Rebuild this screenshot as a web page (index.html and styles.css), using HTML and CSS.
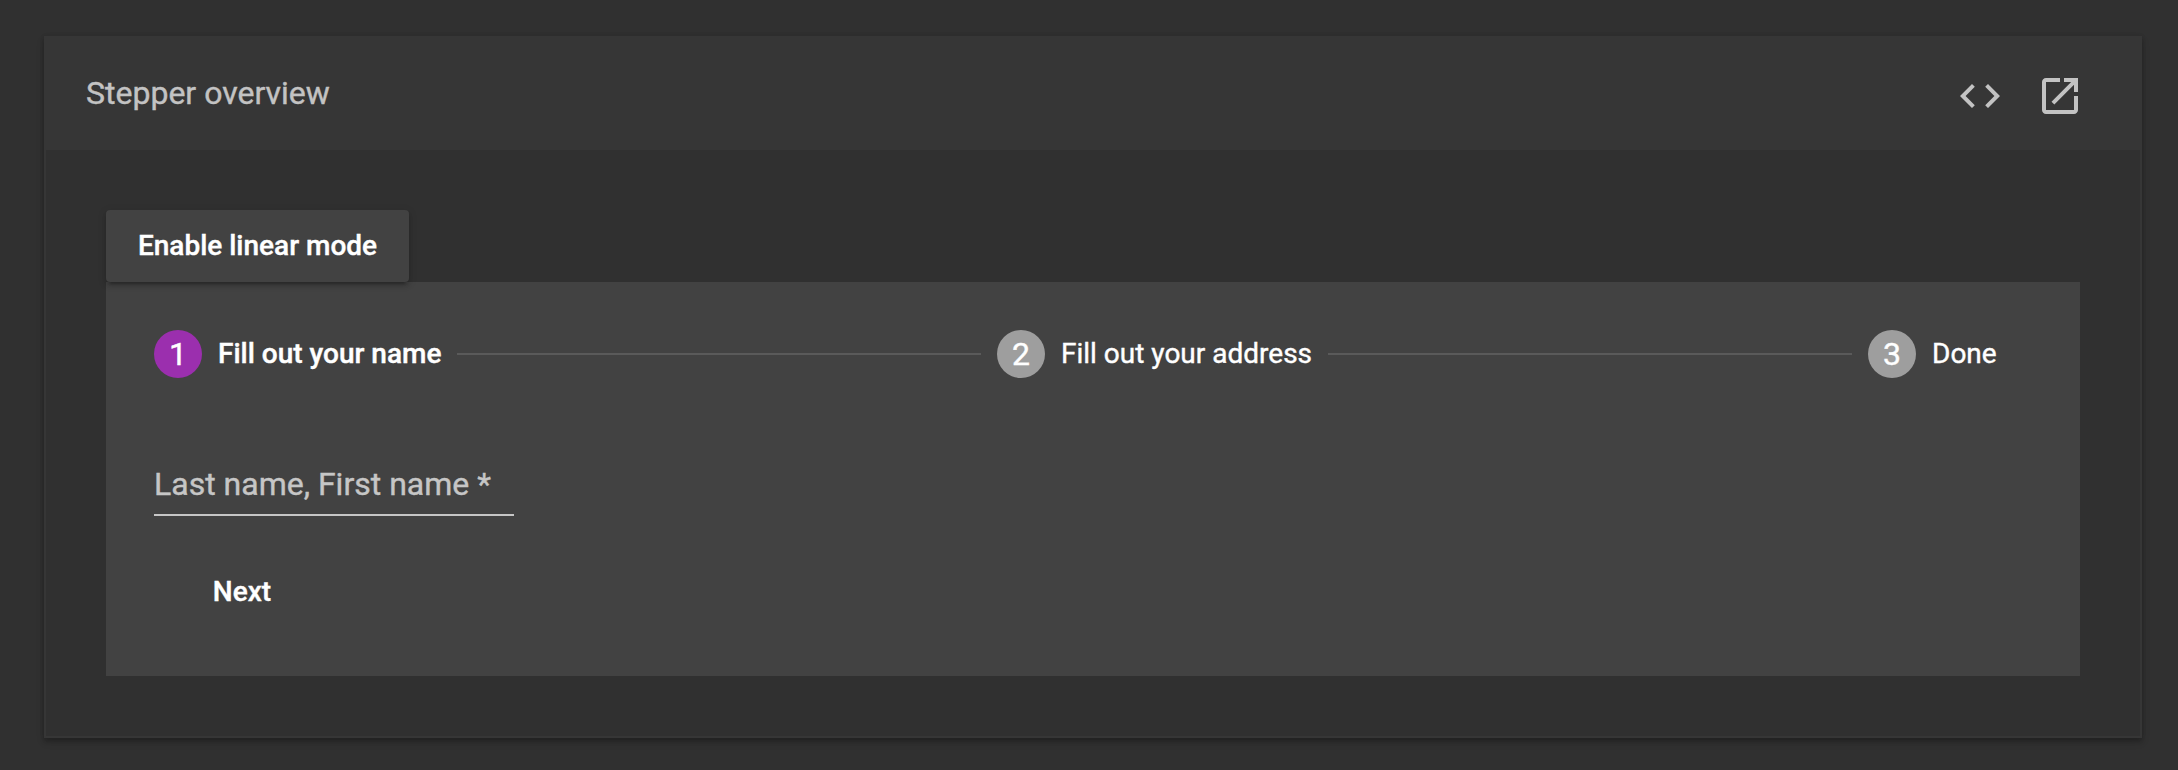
FILE: index.html
```html
<!DOCTYPE html>
<html lang="en">
<head>
<meta charset="utf-8">
<title>Stepper overview</title>
<link rel="stylesheet" href="styles.css">
</head>
<body>
<main class="card">
  <header class="card-header">
    <h1 class="title">Stepper overview</h1>
    <div class="actions">
      <svg class="icon" viewBox="0 0 24 24"><path d="M9.4 16.6L4.8 12l4.6-4.6L8 6l-6 6 6 6 1.4-1.4zm5.2 0l4.6-4.6-4.6-4.6L16 6l6 6-6 6-1.4-1.4z"/></svg>
      <svg class="icon" viewBox="0 0 24 24"><path d="M19 19H5V5h7V3H5c-1.11 0-2 .9-2 2v14c0 1.1.89 2 2 2h14c1.1 0 2-.9 2-2v-7h-2v7zM14 3v2h3.59l-9.83 9.83 1.41 1.41L19 6.41V10h2V3h-7z"/></svg>
    </div>
  </header>
  <section class="card-body">
    <button class="mode-button">Enable linear mode</button>
    <div class="stepper">
      <div class="steps">
        <div class="step active"><span class="badge">1</span><span class="label label-name">Fill out your name</span></div>
        <div class="line"></div>
        <div class="step"><span class="badge">2</span><span class="label label-address">Fill out your address</span></div>
        <div class="line"></div>
        <div class="step"><span class="badge">3</span><span class="label label-done">Done</span></div>
      </div>
      <form class="form">
        <div class="field"><span class="field-label">Last name, First name *</span></div>
        <button type="button" class="next">Next</button>
      </form>
    </div>
  </section>
</main>
</body>
</html>
```
FILE: styles.css
```css
* { box-sizing: border-box; }
body {
  margin: 0;
  padding: 36px 36px 32px 44px;
  height: 770px;
  overflow: hidden;
  background: #303030;
  color: #fff;
  font-family: Roboto, sans-serif;
  -webkit-text-stroke: 0.4px currentColor;
}
.card {
  width: 2098px;
  height: 702px;
  border: 2px solid #363636;
  box-shadow: 0 4px 4px rgba(0, 0, 0, .14), 0 0 4px rgba(0, 0, 0, .1), 0 4px 8px rgba(0, 0, 0, .12);
}
.card-header {
  display: flex;
  align-items: center;
  justify-content: space-between;
  height: 112px;
  padding: 0 56px 0 40px;
  background: #363636;
}
.title {
  margin: 0;
  padding-bottom: 2px;
  font-size: 32px;
  font-weight: 400;
  line-height: 40px;
  color: #c3c3c3;
}
.actions { display: flex; gap: 32px; padding-top: 4px; }
.icon { width: 48px; height: 48px; fill: #c3c3c3; }
.card-body { padding: 60px; }
.mode-button {
  position: relative;
  display: block;
  width: 303px;
  height: 72px;
  padding: 0;
  border: 0;
  border-radius: 4px;
  background: #424242;
  color: #fff;
  font: 500 28px/72px Roboto, sans-serif;
  -webkit-text-stroke: 0.4px currentColor;
  box-shadow: 0 6px 2px -4px rgba(0, 0, 0, .2), 0 4px 4px rgba(0, 0, 0, .14), 0 2px 10px rgba(0, 0, 0, .12);
}
.stepper {
  width: 1974px;
  height: 394px;
  padding: 48px;
  background: #424242;
}
.steps { display: flex; align-items: center; padding-right: 36px; }
.step { display: flex; align-items: center; gap: 16px; }
.badge {
  width: 48px;
  height: 48px;
  border-radius: 50%;
  background: #9e9e9e;
  font-size: 32px;
  line-height: 48px;
  text-align: center;
}
.active .badge { background: #9b2fae; }
.label { font-size: 28px; line-height: 48px; white-space: nowrap; }
.label-name { width: 223px; font-weight: 500; }
.label-address { width: 251px; }
.label-done { width: 64px; }
.line { flex: 1; height: 2px; margin: 0 16px; background: #5a5a5a; }
.form { display: flex; flex-direction: column; align-items: flex-start; padding-top: 82px; }
.field {
  width: 360px;
  height: 56px;
  border-bottom: 2px solid #c6c6c6;
  font-size: 32px;
  line-height: 48px;
  color: #c6c6c6;
}
.field-label { white-space: nowrap; }
.next {
  width: 176px;
  height: 72px;
  margin-top: 40px;
  padding: 0;
  border: 0;
  background: none;
  color: #fff;
  font: 500 28px/72px Roboto, sans-serif;
  -webkit-text-stroke: 0.4px currentColor;
}
```
